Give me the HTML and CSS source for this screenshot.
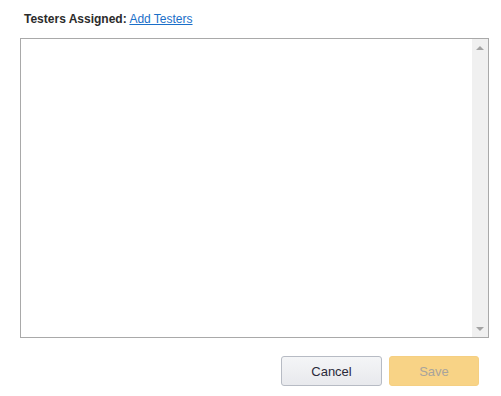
FILE: index.html
```html
<!DOCTYPE html>
<html lang="en">
<head>
    <meta charset="UTF-8">
    <title>Testers Assigned</title>
    <link rel="stylesheet" href="styles.css">
</head>
<body>

    <div class="panel">
        <div class="label-row">
            <b>Testers Assigned:</b> <a href="#">Add Testers</a>
        </div>

        <div class="list-box">
            <div class="list-content"></div>
            <div class="scrollbar">
                <span class="arrow up"></span>
                <span class="arrow down"></span>
            </div>
        </div>

        <div class="actions">
            <button class="btn cancel">Cancel</button>
            <button class="btn save" disabled>Save</button>
        </div>
    </div>

</body>
</html>
```

FILE: styles.css
```css
body {
    margin: 0;
    padding: 0;
    background: #ffffff;
    font-family: "Liberation Sans", Arial, sans-serif;
    font-size: 12px;
    color: #222;
}
.panel {
    padding: 11px 22px 0 20px;
}
.label-row {
    padding-left: 4px;
    height: 16px;
    line-height: 16px;
    color: #2b2b2b;
}
.label-row a {
    color: #1a6fc9;
    text-decoration: underline;
}
.list-box {
    display: flex;
    margin-top: 11px;
    width: 469px;
    height: 300px;
    box-sizing: border-box;
    border: 1px solid #a9a9a9;
}
.list-content {
    flex: 1;
}
.scrollbar {
    width: 16px;
    background: #f0f0f0;
    display: flex;
    flex-direction: column;
    justify-content: space-between;
    align-items: center;
    padding: 7px 0 6px 0;
}
.arrow {
    width: 0;
    height: 0;
    border-left: 4px solid transparent;
    border-right: 4px solid transparent;
}
.arrow.up {
    border-bottom: 4px solid #a3a3a3;
}
.arrow.down {
    border-top: 4px solid #a3a3a3;
}
.actions {
    display: flex;
    justify-content: flex-end;
    gap: 7px;
    margin-top: 18px;
}
.btn {
    height: 30px;
    font-family: "Liberation Sans", Arial, sans-serif;
    font-size: 13px;
    border-radius: 3px;
    cursor: pointer;
}
.cancel {
    width: 101px;
    background: linear-gradient(#f4f5f7, #e8e9ed);
    border: 1px solid #b7bbc4;
    color: #2a2a3a;
}
.save {
    width: 90px;
    background: #f8d386;
    border: 1px solid #f5cf82;
    color: #a8a49c;
}
```
